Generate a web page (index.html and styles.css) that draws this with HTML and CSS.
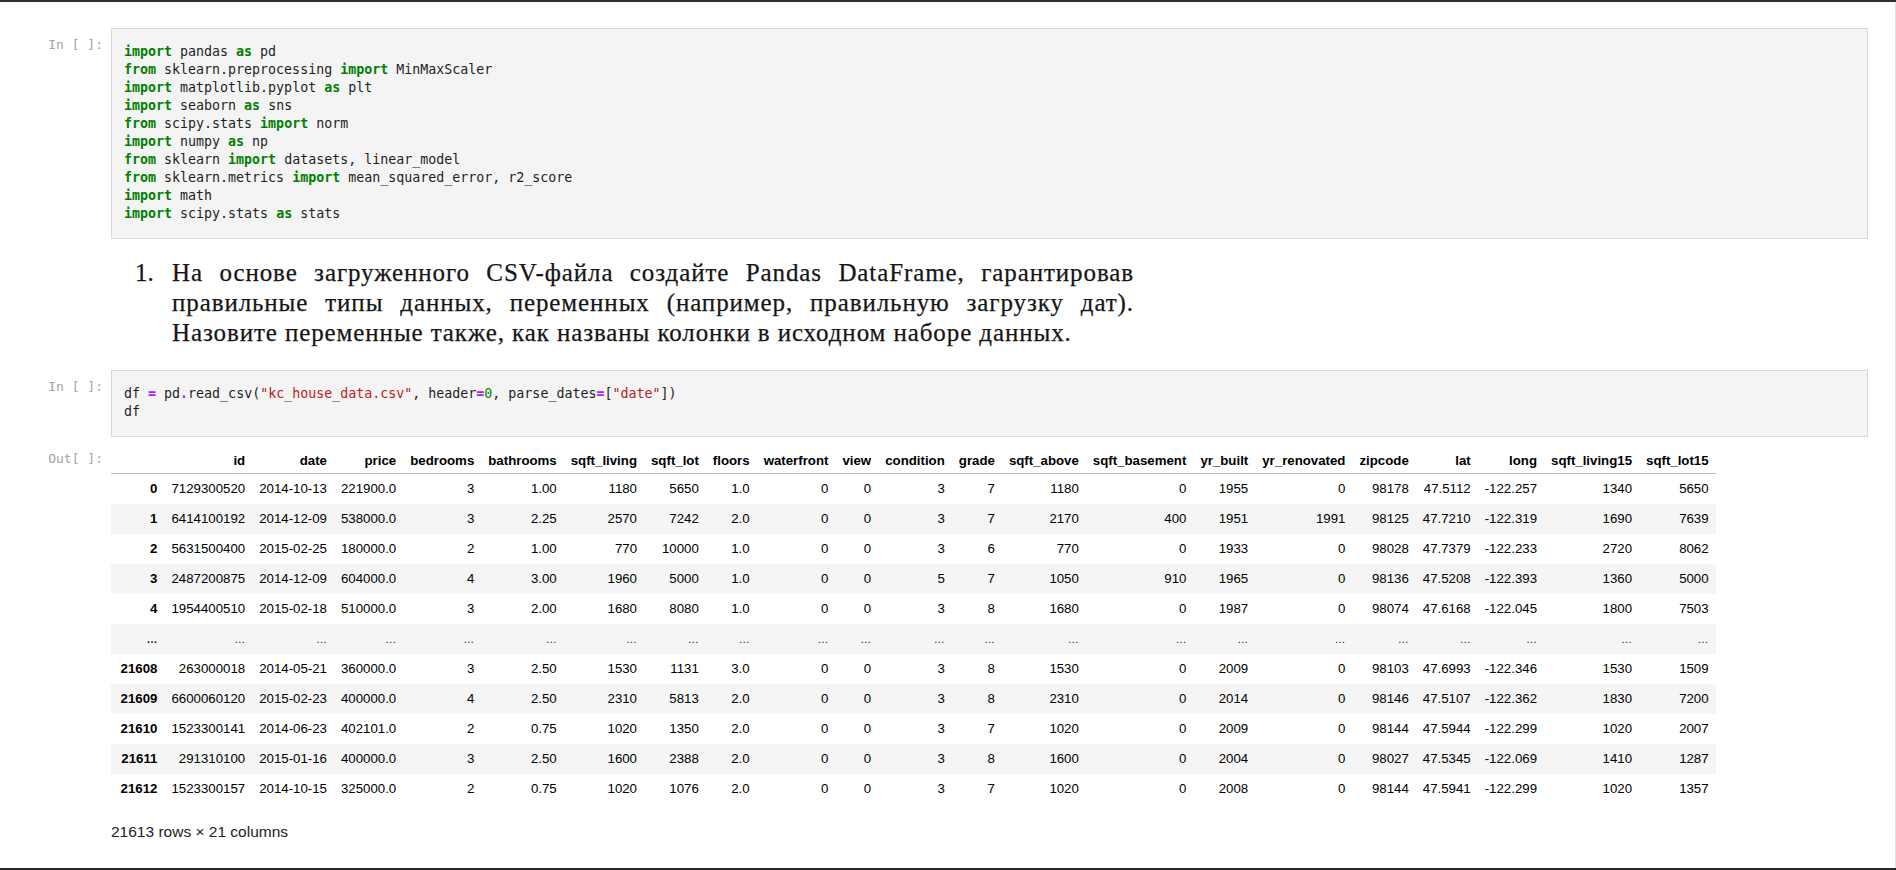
FILE: index.html
```html
<!DOCTYPE html>
<html lang="ru">
<head>
<meta charset="utf-8">
<title>Notebook</title>
<link rel="stylesheet" href="styles.css">
</head>
<body>
<div class="frame-top"></div>
<main class="nb">
  <section class="cell cell-code first">
    <div class="prompt">In&nbsp;[&nbsp;]:</div>
    <div class="input">
      <div class="ln"><span class="kw">import</span> pandas <span class="kw">as</span> pd</div>
      <div class="ln"><span class="kw">from</span> sklearn.preprocessing <span class="kw">import</span> MinMaxScaler</div>
      <div class="ln"><span class="kw">import</span> matplotlib.pyplot <span class="kw">as</span> plt</div>
      <div class="ln"><span class="kw">import</span> seaborn <span class="kw">as</span> sns</div>
      <div class="ln"><span class="kw">from</span> scipy.stats <span class="kw">import</span> norm</div>
      <div class="ln"><span class="kw">import</span> numpy <span class="kw">as</span> np</div>
      <div class="ln"><span class="kw">from</span> sklearn <span class="kw">import</span> datasets, linear_model</div>
      <div class="ln"><span class="kw">from</span> sklearn.metrics <span class="kw">import</span> mean_squared_error, r2_score</div>
      <div class="ln"><span class="kw">import</span> math</div>
      <div class="ln"><span class="kw">import</span> scipy.stats <span class="kw">as</span> stats</div>
    </div>
  </section>

  <section class="cell cell-md">
    <div class="md-body">
      <span class="md-num">1.</span>
      <div class="md-text">
        <span class="md-line just">На основе загруженного CSV-файла создайте Pandas DataFrame, гарантировав</span>
        <span class="md-line just">правильные типы данных, переменных (например, правильную загрузку дат).</span>
        <span class="md-line">Назовите переменные также, как названы колонки в исходном наборе данных.</span>
      </div>
    </div>
  </section>

  <section class="cell cell-code second">
    <div class="prompt">In&nbsp;[&nbsp;]:</div>
    <div class="input">
      <div class="ln">df <span class="op">=</span> pd<span class="op">.</span>read_csv(<span class="str">"kc_house_data.csv"</span>, header<span class="op">=</span><span class="num">0</span>, parse_dates<span class="op">=</span>[<span class="str">"date"</span>])</div>
      <div class="ln">df</div>
    </div>
  </section>

  <section class="cell cell-out">
    <div class="prompt out">Out[&nbsp;]:</div>
    <div class="output">
      <table class="dataframe">
        <thead>
          <tr><th></th><th>id</th><th>date</th><th>price</th><th>bedrooms</th><th>bathrooms</th><th>sqft_living</th><th>sqft_lot</th><th>floors</th><th>waterfront</th><th>view</th><th>condition</th><th>grade</th><th>sqft_above</th><th>sqft_basement</th><th>yr_built</th><th>yr_renovated</th><th>zipcode</th><th>lat</th><th>long</th><th>sqft_living15</th><th>sqft_lot15</th></tr>
        </thead>
        <tbody>
          <tr><th>0</th><td>7129300520</td><td>2014-10-13</td><td>221900.0</td><td>3</td><td>1.00</td><td>1180</td><td>5650</td><td>1.0</td><td>0</td><td>0</td><td>3</td><td>7</td><td>1180</td><td>0</td><td>1955</td><td>0</td><td>98178</td><td>47.5112</td><td>-122.257</td><td>1340</td><td>5650</td></tr>
          <tr><th>1</th><td>6414100192</td><td>2014-12-09</td><td>538000.0</td><td>3</td><td>2.25</td><td>2570</td><td>7242</td><td>2.0</td><td>0</td><td>0</td><td>3</td><td>7</td><td>2170</td><td>400</td><td>1951</td><td>1991</td><td>98125</td><td>47.7210</td><td>-122.319</td><td>1690</td><td>7639</td></tr>
          <tr><th>2</th><td>5631500400</td><td>2015-02-25</td><td>180000.0</td><td>2</td><td>1.00</td><td>770</td><td>10000</td><td>1.0</td><td>0</td><td>0</td><td>3</td><td>6</td><td>770</td><td>0</td><td>1933</td><td>0</td><td>98028</td><td>47.7379</td><td>-122.233</td><td>2720</td><td>8062</td></tr>
          <tr><th>3</th><td>2487200875</td><td>2014-12-09</td><td>604000.0</td><td>4</td><td>3.00</td><td>1960</td><td>5000</td><td>1.0</td><td>0</td><td>0</td><td>5</td><td>7</td><td>1050</td><td>910</td><td>1965</td><td>0</td><td>98136</td><td>47.5208</td><td>-122.393</td><td>1360</td><td>5000</td></tr>
          <tr><th>4</th><td>1954400510</td><td>2015-02-18</td><td>510000.0</td><td>3</td><td>2.00</td><td>1680</td><td>8080</td><td>1.0</td><td>0</td><td>0</td><td>3</td><td>8</td><td>1680</td><td>0</td><td>1987</td><td>0</td><td>98074</td><td>47.6168</td><td>-122.045</td><td>1800</td><td>7503</td></tr>
          <tr class="ellipsis"><th>…</th><td>…</td><td>…</td><td>…</td><td>…</td><td>…</td><td>…</td><td>…</td><td>…</td><td>…</td><td>…</td><td>…</td><td>…</td><td>…</td><td>…</td><td>…</td><td>…</td><td>…</td><td>…</td><td>…</td><td>…</td><td>…</td></tr>
          <tr><th>21608</th><td>263000018</td><td>2014-05-21</td><td>360000.0</td><td>3</td><td>2.50</td><td>1530</td><td>1131</td><td>3.0</td><td>0</td><td>0</td><td>3</td><td>8</td><td>1530</td><td>0</td><td>2009</td><td>0</td><td>98103</td><td>47.6993</td><td>-122.346</td><td>1530</td><td>1509</td></tr>
          <tr><th>21609</th><td>6600060120</td><td>2015-02-23</td><td>400000.0</td><td>4</td><td>2.50</td><td>2310</td><td>5813</td><td>2.0</td><td>0</td><td>0</td><td>3</td><td>8</td><td>2310</td><td>0</td><td>2014</td><td>0</td><td>98146</td><td>47.5107</td><td>-122.362</td><td>1830</td><td>7200</td></tr>
          <tr><th>21610</th><td>1523300141</td><td>2014-06-23</td><td>402101.0</td><td>2</td><td>0.75</td><td>1020</td><td>1350</td><td>2.0</td><td>0</td><td>0</td><td>3</td><td>7</td><td>1020</td><td>0</td><td>2009</td><td>0</td><td>98144</td><td>47.5944</td><td>-122.299</td><td>1020</td><td>2007</td></tr>
          <tr><th>21611</th><td>291310100</td><td>2015-01-16</td><td>400000.0</td><td>3</td><td>2.50</td><td>1600</td><td>2388</td><td>2.0</td><td>0</td><td>0</td><td>3</td><td>8</td><td>1600</td><td>0</td><td>2004</td><td>0</td><td>98027</td><td>47.5345</td><td>-122.069</td><td>1410</td><td>1287</td></tr>
          <tr><th>21612</th><td>1523300157</td><td>2014-10-15</td><td>325000.0</td><td>2</td><td>0.75</td><td>1020</td><td>1076</td><td>2.0</td><td>0</td><td>0</td><td>3</td><td>7</td><td>1020</td><td>0</td><td>2008</td><td>0</td><td>98144</td><td>47.5941</td><td>-122.299</td><td>1020</td><td>1357</td></tr>
        </tbody>
      </table>
      <p class="shape">21613 rows × 21 columns</p>
    </div>
  </section>
</main>
<div class="frame-bottom"></div>
</body>
</html>
```

FILE: styles.css
```css
html, body {
  margin: 0;
  padding: 0;
  background: #ffffff;
}

body {
  height: 870px;
  overflow: hidden;
  display: flex;
  flex-direction: column;
  font-family: "Liberation Sans", Arial, sans-serif;
  color: #000;
}

.frame-top {
  height: 2px;
  background: #2f2f2f;
  flex: none;
}

.frame-bottom {
  height: 2px;
  background: #262626;
  flex: none;
}

.nb {
  flex: 1;
  min-height: 0;
  padding: 26px 27px 0 0;
  border-right: 1px solid #e3e3e3;
  overflow: hidden;
}

.cell {
  display: flex;
  align-items: flex-start;
}

.prompt {
  flex: none;
  width: 103px;
  margin-right: 8px;
  text-align: right;
  font-family: "DejaVu Sans Mono", "Liberation Mono", monospace;
  font-size: 13px;
  line-height: 18px;
  color: #a3a3a3;
  padding-top: 8px;
  white-space: nowrap;
}

.prompt.out {
  padding-top: 3px;
}

.input {
  flex: 1;
  margin: 0;
  background: #f4f4f4;
  border: 1px solid #d8d8d8;
  padding: 14px 12px 15px 12px;
  font-family: "DejaVu Sans Mono", "Liberation Mono", monospace;
  font-size: 13.3px;
  line-height: 18px;
  color: #1e1e1e;
}

.ln {
  white-space: pre;
  height: 18px;
}

.kw {
  color: #008000;
  font-weight: bold;
}

.op {
  color: #aa22ff;
  font-weight: bold;
}

.str {
  color: #ba2121;
}

.num {
  color: #008800;
}

/* markdown cell */
.cell-md {
  margin-top: 19px;
  margin-left: 111px;
}

.md-body {
  display: flex;
  padding-left: 24px;
  font-family: "Liberation Serif", "Times New Roman", serif;
  font-size: 25px;
  line-height: 30px;
  color: #161616;
  letter-spacing: 0.9px;
  -webkit-text-stroke: 0.25px #161616;
}

.md-num {
  flex: none;
  width: 37px;
  letter-spacing: 0;
}

.md-text {
  width: 962px;
}

.md-line {
  display: block;
  white-space: nowrap;
  text-align: left;
}

.md-line.just {
  white-space: normal;
  text-align: justify;
  text-align-last: justify;
}

.cell-code.second {
  margin-top: 22px;
}

/* output */
.cell-out {
  margin-top: 10px;
}

.output {
  flex: 1;
}

.dataframe {
  border-collapse: collapse;
  border-spacing: 0;
  font-size: 13.25px;
  color: #000;
}

.dataframe th,
.dataframe td {
  text-align: right;
  vertical-align: middle;
  padding: 0 7px;
  white-space: nowrap;
}

.dataframe thead th {
  height: 26px;
  font-weight: bold;
  border-bottom: 1px solid #bdbdbd;
}

.dataframe tbody th {
  font-weight: bold;
}

.dataframe tbody tr > th:first-child,
.dataframe thead tr > th:first-child {
  padding-left: 9.6px;
}

.dataframe tbody tr {
  height: 30px;
}

.dataframe tbody tr:nth-child(even) {
  background: #f5f5f5;
}

.dataframe tr.ellipsis th,
.dataframe tr.ellipsis td {
  font-size: 11px;
  color: #222;
}

.shape {
  margin: 19px 0 0 0;
  font-size: 15.5px;
  line-height: 18px;
  color: #222;
}
```
